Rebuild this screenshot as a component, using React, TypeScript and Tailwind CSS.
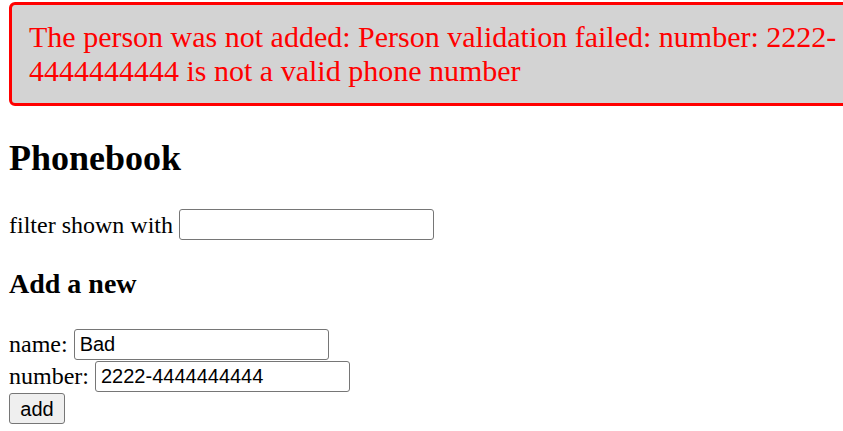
import { useState } from "react";

const Notification = ({ message }: { message: string | null }) => {
  if (message === null) return null;
  return (
    <div className="w-[900px] rounded-[6px] border-[3px] border-[#ff0000] bg-[#d3d3d3] py-[15px] pl-[17px] pr-[17px] text-[30px] leading-[34px] text-[#ff0000]">
      {message}
      <wbr />
      4444444444 is not a valid phone number
    </div>
  );
};

const inputCls =
  "h-[31px] w-[255px] rounded-[3px] border border-[#767676] bg-white px-[5px] font-['Liberation_Sans',Arial,sans-serif] text-[20px] text-black outline-none";

export default function App() {
  const [filter, setFilter] = useState("");
  const [newName, setNewName] = useState("Bad");
  const [newNumber, setNewNumber] = useState("2222-4444444444");

  return (
    <div className="h-[431px] w-[843px] overflow-hidden bg-white pl-[9px] pt-[2px] font-['Liberation_Serif','Times_New_Roman',serif] text-[24px] text-black">
      <Notification message="The person was not added: Person validation failed: number: 2222-" />

      <h2 className="mt-[32px] text-[36px] font-bold leading-[40px]">Phonebook</h2>

      <div className="mt-[31px] flex h-[31px] items-center gap-[6px]">
        <span>filter shown with</span>
        <input className={inputCls} value={filter} onChange={(e) => setFilter(e.target.value)} />
      </div>

      <h3 className="mt-[28px] text-[28px] font-bold leading-[31px]">Add a new</h3>

      <form className="mt-[29px]" onSubmit={(e) => e.preventDefault()}>
        <div className="flex h-[32px] items-center gap-[6px]">
          <span>name:</span>
          <input className={inputCls} value={newName} onChange={(e) => setNewName(e.target.value)} />
        </div>
        <div className="flex h-[32px] items-center gap-[6px]">
          <span>number:</span>
          <input className={inputCls} value={newNumber} onChange={(e) => setNewNumber(e.target.value)} />
        </div>
        <div className="flex pt-[1px]">
          <button
            type="submit"
            className="h-[31px] w-[56px] rounded-[3px] border border-[#767676] bg-[#efefef] font-['Liberation_Sans',Arial,sans-serif] text-[20px] text-black"
          >
            add
          </button>
        </div>
      </form>
    </div>
  );
}
